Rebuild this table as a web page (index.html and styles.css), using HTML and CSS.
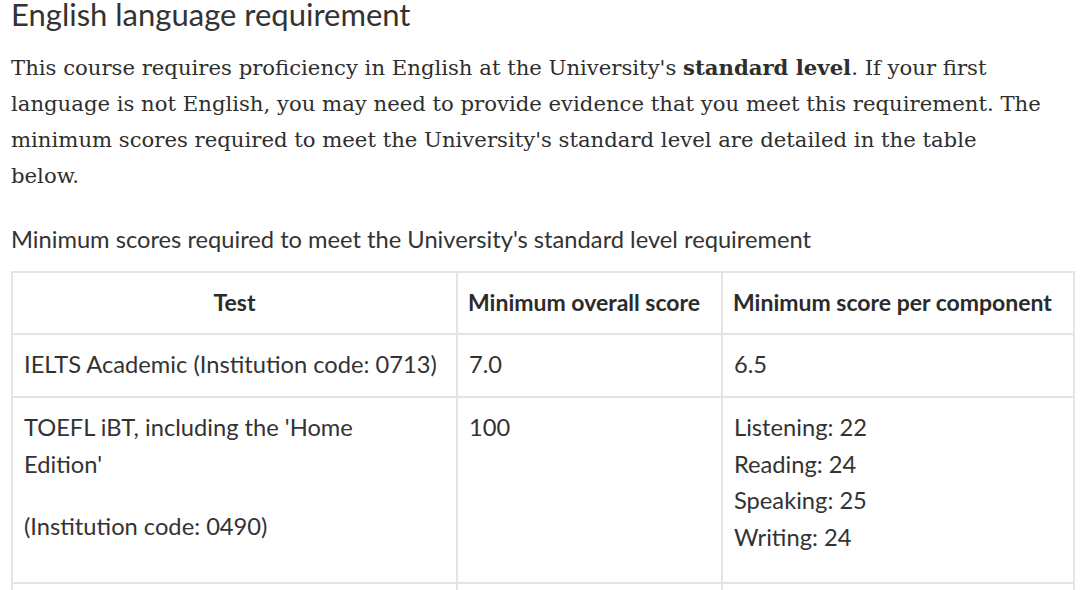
FILE: index.html
```html
<!DOCTYPE html>
<html lang="en">
<head>
<meta charset="utf-8">
<title>English language requirement</title>
<link rel="stylesheet" href="styles.css">
</head>
<body>
<main class="page">
  <h2 class="title">English language requirement</h2>
  <p class="intro">This course requires proficiency in English at the University's <strong>standard level</strong>. If your first language is not English, you may need to provide evidence that you meet this requirement. The minimum scores required to meet the University's standard level are detailed in the table below.</p>
  <table class="scores">
    <caption>Minimum scores required to meet the University's standard level requirement</caption>
    <colgroup>
      <col class="c-test">
      <col class="c-overall">
      <col class="c-comp">
    </colgroup>
    <thead>
      <tr>
        <th>Test</th>
        <th>Minimum overall score</th>
        <th>Minimum score per component</th>
      </tr>
    </thead>
    <tbody>
      <tr>
        <td>IELTS Academic (Institution code: 0713)</td>
        <td>7.0</td>
        <td>6.5</td>
      </tr>
      <tr>
        <td>
          <p>TOEFL iBT, including the 'Home<br>Edition'</p>
          <p>(Institution code: 0490)</p>
        </td>
        <td>100</td>
        <td>
          <p class="comps">Listening: 22<br>Reading: 24<br>Speaking: 25<br>Writing: 24</p>
        </td>
      </tr>
      <tr class="next">
        <td></td>
        <td></td>
        <td></td>
      </tr>
    </tbody>
  </table>
</main>
</body>
</html>
```

FILE: styles.css
```css
html, body {
  margin: 0;
  padding: 0;
  background: #ffffff;
}

body {
  color: #333333;
  font-family: "Lato", "Liberation Sans", sans-serif;
}

.page {
  padding: 0 7px 0 11px;
}

.title {
  margin: 0 0 22px;
  font-size: 31px;
  line-height: 28px;
  font-weight: 400;
  color: #333333;
}

.intro {
  max-width: 1035px;
  margin: 0 0 30px;
  font-family: "DejaVu Serif", serif;
  font-size: 21.2px;
  line-height: 36px;
  color: #2e2e2e;
}

.intro strong {
  font-weight: 700;
}

.scores {
  width: 1062px;
  border-collapse: collapse;
  table-layout: fixed;
  font-size: 23.7px;
  line-height: 36.6px;
}

.scores caption {
  caption-side: top;
  text-align: left;
  font-size: 23.7px;
  line-height: 30px;
  padding-bottom: 17px;
}

.c-test { width: 445px; }
.c-overall { width: 265px; }
.c-comp { width: 352px; }

.scores th,
.scores td {
  border: 2px solid #e4e4e0;
  text-align: left;
  vertical-align: top;
  padding: 11px 11px 14px;
}

.scores th {
  padding: 11px 10px 12px;
  font-size: 23px;
  font-weight: 700;
  color: #2b2b2b;
  white-space: nowrap;
}

.scores th:first-child {
  text-align: center;
}

.scores td p {
  margin: 0;
}

.scores td p + p {
  margin-top: 26px;
}

.scores .comps {
  margin-bottom: 12px;
}

.scores .next td {
  height: 30px;
  padding: 0;
}
```
